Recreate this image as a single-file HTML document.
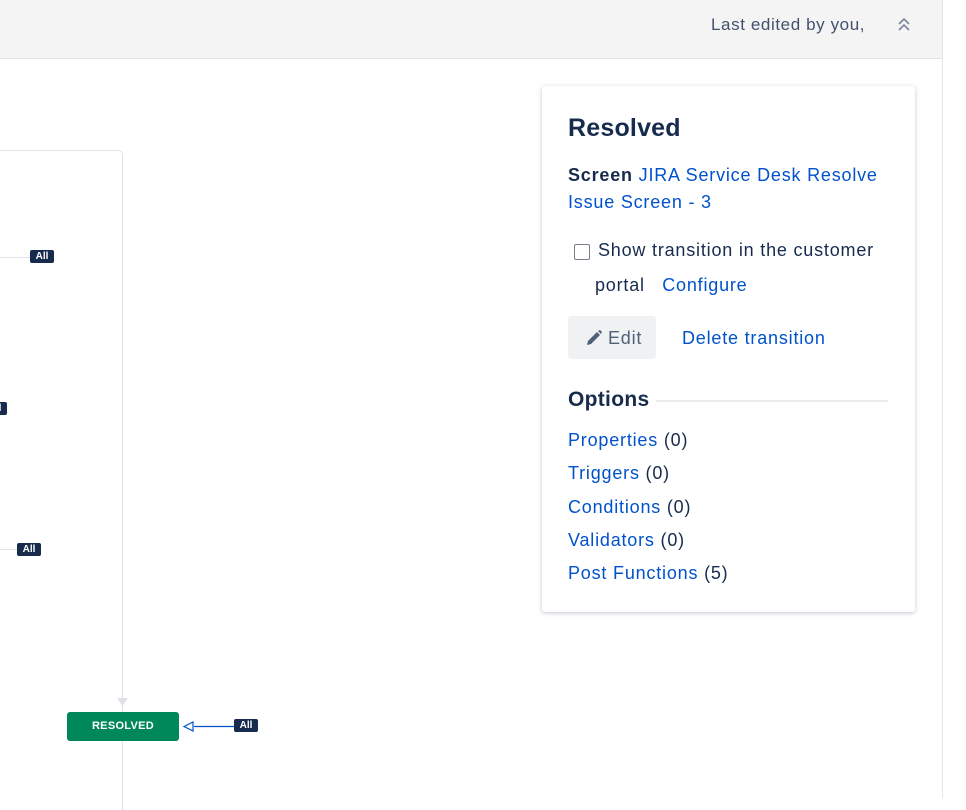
<!DOCTYPE html>
<html><head><style>
*{margin:0;padding:0;box-sizing:border-box}
body{width:966px;height:798px;background:#fff;font-family:"Liberation Sans",sans-serif;position:relative;overflow:hidden;color:#172b4d}
.hdr{position:absolute;left:0;top:0;width:942px;height:59px;background:#f4f4f4;border-bottom:1px solid #e4e5e8}
.vr{position:absolute;left:942px;top:0;width:1px;height:798px;background:#e4e5e8}
.abs{position:absolute}
.all{position:absolute;background:#172b4d;color:#fff;font-size:10px;font-weight:bold;width:24px;height:13px;line-height:13px;text-align:center;border-radius:2px}
.panel{position:absolute;left:542px;top:86px;width:373px;height:526px;background:#fff;border-radius:3px;box-shadow:0 1px 4px rgba(9,30,66,.25)}
a{color:#0052cc;text-decoration:none}
.t{position:absolute;font-size:18px;white-space:nowrap;letter-spacing:0.8px}
</style></head><body>
<div class="hdr"></div>
<div class="vr"></div>
<div class="abs" style="left:711px;top:15px;font-size:17px;color:#42526e;letter-spacing:0.6px">Last edited by you,</div>
<svg class="abs" style="left:897px;top:16px" width="14" height="16"><path d="M2 8l5-5 5 5M2 14l5-5 5 5" stroke="#7a869a" stroke-width="1.6" fill="none"/></svg>
<div class="abs" style="left:-10px;top:150px;width:133px;height:660px;border:1px solid #dfe1e6;border-bottom:none;border-left:none;border-radius:0 5px 0 0"></div>
<div class="abs" style="left:0;top:257px;width:30px;height:1px;background:#dfe1e6"></div>
<div class="all" style="left:30px;top:250px">All</div>
<div class="all" style="left:-17px;top:402px">All</div>
<div class="abs" style="left:0;top:549px;width:17px;height:1px;background:#dfe1e6"></div>
<div class="all" style="left:17px;top:543px">All</div>
<svg class="abs" style="left:117px;top:698px" width="11" height="10"><path d="M0 0h11L5.5 8z" fill="#dfe1e6"/></svg>
<div class="abs" style="left:67px;top:712px;width:112px;height:29px;background:#00875a;border-radius:3px;color:#fff;font-size:11px;font-weight:bold;text-align:center;line-height:29px;letter-spacing:0.3px">RESOLVED</div>
<svg class="abs" style="left:182px;top:720px" width="54" height="13"><path d="M12 6.5H53" stroke="#0052cc" stroke-width="1.2"/><path d="M2 6.5L11 2v9z" fill="#fff" stroke="#0052cc" stroke-width="1.2"/></svg>
<div class="all" style="left:234px;top:719px">All</div>
<div class="panel">
<div class="t" style="left:26px;top:28px;font-size:25px;font-weight:bold;letter-spacing:0.2px">Resolved</div>
<div class="t" style="left:26px;top:76px;line-height:27px;white-space:normal;width:330px"><b>Screen</b> <a>JIRA Service Desk Resolve Issue Screen - 3</a></div>
<div class="abs" style="left:32px;top:158px;width:16px;height:16px;border:1.5px solid #7a7f8c;border-radius:2px"></div>
<div class="t" style="left:56px;top:154px">Show transition in the customer</div>
<div class="t" style="left:53px;top:189px">portal&nbsp;&nbsp;&nbsp;<a>Configure</a></div>
<div class="abs" style="left:26px;top:230px;width:88px;height:43px;background:#f0f1f3;border-radius:3px"></div>
<svg class="abs" style="left:43px;top:243px" width="18" height="18"><path d="M2 16l1-4 9-9 3 3-9 9z M13 2l2-1 2 2-1 2z" fill="#505f79"/></svg>
<div class="t" style="left:66px;top:242px;color:#505f79">Edit</div>
<div class="t" style="left:140px;top:242px"><a>Delete transition</a></div>
<div class="t" style="left:26px;top:302px;font-size:21px;font-weight:bold;letter-spacing:0.3px">Options</div>
<div class="abs" style="left:114px;top:314px;width:232px;height:2px;background:#ebecf0"></div>
<div class="t" style="left:26px;top:344px"><a>Properties</a> (0)</div>
<div class="t" style="left:26px;top:377px"><a>Triggers</a> (0)</div>
<div class="t" style="left:26px;top:411px"><a>Conditions</a> (0)</div>
<div class="t" style="left:26px;top:444px"><a>Validators</a> (0)</div>
<div class="t" style="left:26px;top:477px"><a>Post Functions</a> (5)</div>
</div>
</body></html>
